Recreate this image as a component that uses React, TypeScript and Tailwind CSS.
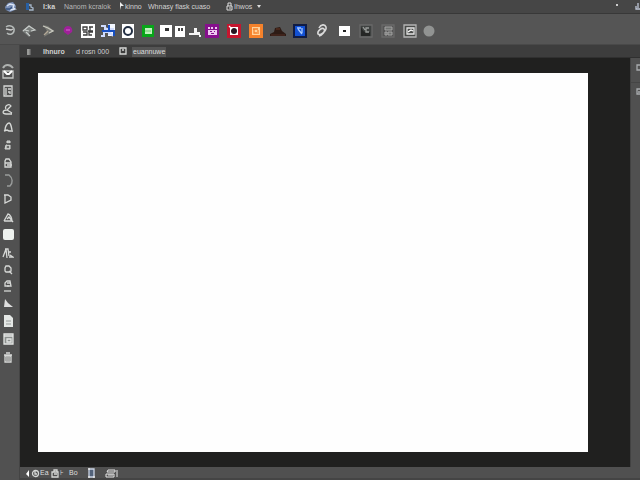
import React from "react";

type IconProps = { label: string; size?: string; w?: number; h?: number; children: React.ReactNode };

function Tool({ label, size = "w-[22px] h-5", w = 16, h = 16, children }: IconProps) {
  return (
    <button type="button" aria-label={label} className={`flex shrink-0 items-center justify-center ${size}`}>
      <svg width={w} height={h} viewBox={`0 0 ${w} ${h}`} fill="none" strokeWidth={1.3} className="shrink-0" aria-hidden="true">
        {children}
      </svg>
    </button>
  );
}

const light = "#d6d8d6";

function MenuBar() {
  return (
    <header className="flex h-[14px] items-center border-b border-[#383838] bg-[#464646] text-[7px] leading-3 text-[#d2d2d2]">
      <Tool label="Home" size="w-5 h-3" w={13} h={12}>
        <path d="M1 6 4 2l5-1 3 4-1 4-5 2-4-2Z" fill="#7b90b8" />
        <path d="m3 5 3-2 4 1-1 3 2 1-5 1" stroke="#dce6f5" />
        <path d="M2 8h4l2-2" stroke="#34527f" />
      </Tool>
      <Tool label="Application" size="w-5 h-3" w={10} h={10}>
        <path d="M1 1h3v7H1z" fill="#2860a4" />
        <path d="M4 3h2v2l2 1v2H4" stroke="#a4b5c8" />
      </Tool>
      <nav className="flex items-center whitespace-nowrap">
        <button type="button" className="w-6 pl-[3px] text-left font-bold">I:ka</button>
        <button type="button" className="w-[55px] text-left text-[#b8b8b8]">Nanom kcralok</button>
        <button type="button" className="flex w-[29px] items-center gap-px text-left">
          <svg width="5" height="9" viewBox="0 0 5 9" aria-hidden="true"><path d="M1 0v8l1-4h3z" fill="#eee" /></svg>
          kinno
        </button>
        <button type="button" className="w-[78px] text-left">Whnasy flask cuaso</button>
        <button type="button" className="flex items-center gap-px">
          <svg width="7" height="9" viewBox="0 0 7 9" fill="none" aria-hidden="true"><path d="M2 4V1h3v3M1 4h5v4H1zM3 6h2" stroke="#ddd" /></svg>
          Ihwos
          <svg width="5" height="5" viewBox="0 0 5 5" className="ml-1" aria-hidden="true"><path d="M0 1h4L2 4z" fill="#ddd" /></svg>
        </button>
      </nav>
      <div className="ml-auto flex items-center">
        <button type="button" aria-label="Minimize" className="mr-[17px] mb-[4px] h-[2px] w-[2px] bg-[#ccc]" />
        <Tool label="Window" size="w-[5px] h-3" w={5} h={9}>
          <path d="M1 4v3h4M3 1v5" stroke="#bfc6d6" />
        </Tool>
      </div>
    </header>
  );
}

function ToolBar() {
  return (
    <div className="flex h-[31px] items-center border-b border-[#494949] bg-[#555555] pt-[3px]">
      <div className="flex w-[78px]">
        <Tool label="Undo" size="w-[19px] h-5">
          <path d="M4 4c4-3 9 0 8 4s-5 4-7 2" stroke="#b5bab8" strokeWidth="1.5" />
          <path d="m4 6 5 1 2-1" stroke="#d0d0d0" />
        </Tool>
        <Tool label="Move" size="w-[19px] h-5">
          <path d="m1 8 7-6 6 5-6 3 0 4Z" fill="#777b79" />
          <path d="m2 8 6-5 6 4-4 1M5 9l4 4M4 7l4 1" stroke="#c8ccca" strokeWidth="1.2" />
        </Tool>
        <Tool label="Brush" size="w-[19px] h-5">
          <path d="m3 2 5 1 6 5-5 3-5 3 3-6Z" fill="#777873" />
          <path d="m3 3 5 2 5 3-4 2" stroke="#c9c9bf" />
          <path d="m4 12 4-4" stroke="#b3a896" />
        </Tool>
        <Tool label="Color spot">
          <path d="M8 3c3 0 5 3 4 6l-4 3-4-3c-1-3 1-6 4-6Z" fill="#a0209a" />
          <path d="M6 7h4" stroke="#c85bc3" />
        </Tool>
      </div>
      <div className="flex w-[81px]">
        <Tool label="Grid" size="w-5 h-5">
          <path d="M1 1h14v14H1z" fill="#fff" />
          <path d="M3 4h4v3H3zM9 4h4M10 4v4h3M3 9h4v3H3M13 9H9v3h3M8 8h3" stroke="#3c3c3c" />
        </Tool>
        <Tool label="Link objects" size="w-5 h-5">
          <path d="M8 1h7v12H8z" fill="#f3f7ff" />
          <path d="M1 3h4v3h4v6M1 13h3V9h4M6 5l7 8M9 1v5h5" stroke="#cfdcff" strokeWidth="2" />
          <path d="M9 2v6h5v5M2 8h6" stroke="#174fc1" strokeWidth="2" />
        </Tool>
        <Tool label="Ellipse" size="w-5 h-5">
          <path d="M2 1h12v14H2z" fill="#fff" />
          <circle cx="8" cy="8" r="4" stroke="#243044" strokeWidth="2" />
        </Tool>
        <Tool label="Green swatch" size="w-5 h-5">
          <path d="M2 2h12v12H2z" fill="#08a619" />
          <path d="M5 5h7v6H5z" fill="#bff1bd" />
          <path d="M5 8h6" stroke="#80d781" />
        </Tool>
      </div>
      <div className="flex w-[42px]">
        <Tool label="Message" size="w-[14px] h-5" w={12}>
          <path d="M0 2h12v12H0z" fill="#fff" /><path d="M5 5h4v3H5z" fill="#333" />
        </Tool>
        <Tool label="Quote" size="w-[14px] h-5" w={10}>
          <path d="M0 3h10v11H0z" fill="#fff" /><path d="M3 5h2v3H3zM6 5h2v3H6z" fill="#444" />
        </Tool>
        <Tool label="Stamp" size="w-[14px] h-5" w={13}>
          <path d="M6 5h3v4h3v3H1v-2h5zM11 12h2v2h-2z" fill="#f5f5f5" />
        </Tool>
      </div>
      <div className="flex">
        <Tool label="Pattern">
          <path d="M1 1h14v14H1z" fill="#86108c" />
          <path d="M4 4h2v2H4zM7 4h2v2H7zM11 4h2v2h-2zM4 7h9v5H4z" fill="#edcaef" />
          <path d="M6 8h2v1H6zM10 8h1v1h-1zM7 10h3v1H7z" fill="#86108c" />
        </Tool>
        <Tool label="Red swatch">
          <path d="M1 1h14v14H1z" fill="#c5162f" />
          <path d="M4 4h8v8H4z" fill="#fff" /><circle cx="8" cy="8" r="3" fill="#271622" />
          <path d="m3 3 3 3" stroke="#fff" />
        </Tool>
        <Tool label="Orange swatch">
          <path d="M1 1h14v14H1z" fill="#f5822b" />
          <path d="M4 4h8v8H4z" fill="#ffd39d" /><path d="M5 6h5M6 6v4h3M10 7v4" stroke="#f5822b" />
        </Tool>
        <Tool label="Landscape">
          <path d="M0 13v-2l4-2 1-4 5-1 2 4 4 3v2z" fill="#2d1b15" />
          <path d="M1 12h14" stroke="#4b2920" /><path d="M6 6h4" stroke="#5b3020" />
        </Tool>
        <Tool label="Blue swatch">
          <path d="M1 1h14v14H1z" fill="#101c44" /><path d="M3 3h10v10H3z" fill="#1251d4" />
          <path d="M5 5h4M6 6l4 5M10 5v5" stroke="#a6c9ff" />
        </Tool>
        <Tool label="Link">
          <path d="M5 5c2-4 6-4 7-1 1 4-6 9-8 7-1-3 4-7 6-5s-2 6-5 7" stroke="#dadada" strokeWidth="1.6" />
        </Tool>
        <Tool label="Subtract" w={12}>
          <path d="M1 3h11v10H1z" fill="#fff" /><path d="M5 8h3" stroke="#222" strokeWidth="2" />
        </Tool>
        <Tool label="Mask">
          <path d="M2 2h12v12H2z" fill="#3e4140" stroke="#696969" />
          <path d="M3 4c2 5 4 6 9 5v4H3z" fill="#252625" /><path d="M11 5H8v4h3M5 4l2 3" stroke="#999c9a" />
        </Tool>
        <Tool label="Layers">
          <path d="M2 2h12v12H2z" stroke="#6a6a6a" />
          <path d="M5 4h7v3H5zM5 9h2v3H5zM8 9h4v3H8z" fill="#707371" stroke="#a4a4a4" strokeWidth="1" />
        </Tool>
        <Tool label="Preview">
          <path d="M2 2h12v12H2z" fill="#494b49" stroke="#b4b4b4" />
          <path d="M5 5h7v6H5z" stroke="#e5e5e5" /><path d="m6 9 3-2 2 1" stroke="#fff" />
        </Tool>
        <Tool label="Circle brush" size="w-[16px] h-5" w={12} h={12}>
          <circle cx="6" cy="6" r="5.5" fill="#919392" />
        </Tool>
      </div>
    </div>
  );
}

function LeftRail() {
  const slot = "w-4 h-[18px]";
  return (
    <aside className="flex w-5 shrink-0 flex-col border-r border-[#444] bg-[#515151] pt-4">
      <Tool label="Hand" size="w-4 h-[21px]" w={14} h={17}>
        <path d="M2 5c2-4 7-4 10 0" stroke="#aeb1af" strokeWidth="2" />
        <path d="M2 8h10v7H2z" stroke="#c5c7c5" /><path d="m3 8 3 3h2l3-3" stroke="#fff" strokeWidth="2" />
      </Tool>
      <Tool label="Artboard" size={slot} w={12} h={12}>
        <path d="M2 1h8v10H2z" stroke={light} /><path d="M4 3v7M6 4h3M6 7h2v2" stroke={light} />
      </Tool>
      <Tool label="Lasso" size={slot} w={12} h={12}>
        <path d="M4 6c-2-3 3-6 5-3L5 7c-5 0-5 4-1 4h6M5 7l5 3" stroke={light} />
      </Tool>
      <Tool label="Pen" size={slot} w={12} h={12}>
        <path d="M3 9c0-3 2-7 4-7s2 3 3 7M2 10l3-1 2 1h4" stroke={light} strokeWidth="1.4" />
      </Tool>
      <Tool label="Clone" size={slot} w={10} h={10}>
        <path d="M4 1h3v2H4zM3 5h4v4H2z" fill="#afb2af" stroke={light} strokeWidth="1" /><path d="M4 4h3M4 7h2" stroke="#555" />
      </Tool>
      <Tool label="Frame" size={slot} w={10} h={10}>
        <path d="M2 9V3l1-2h3l2 3v5Z" stroke={light} /><path d="M2 5h6M4 7h5" stroke={light} />
      </Tool>
      <Tool label="Curve" size={slot} w={12} h={14}>
        <path d="M3 1h4c4 3 4 8 1 11H5" stroke="#999c9b" strokeWidth="1.4" />
      </Tool>
      <Tool label="Shape" size={slot} w={10} h={10}>
        <path d="M2 1v8l6-3V3L5 1H1" stroke={light} />
      </Tool>
      <Tool label="Path text" size={slot} w={11} h={11}>
        <path d="m1 9 4-7c2 0 4 4 4 7H1M4 7l2-2 4 5" stroke={light} />
      </Tool>
      <Tool label="Rounded rectangle" size={slot} w={12} h={12}>
        <rect x="1" y="0" width="11" height="11" rx="2" fill="#edf1ee" />
      </Tool>
      <Tool label="Perspective" size={slot} w={12} h={12}>
        <path d="m1 10 3-8 1 9M3 2h3l1 7M7 5h2M8 8l3 2H7" stroke={light} />
      </Tool>
      <Tool label="Zoom" size="w-4 h-4" w={10} h={10}>
        <path d="M3 1h3l2 2v3L6 7H3L2 6V3ZM6 6l3 3" stroke={light} />
      </Tool>
      <Tool label="Sampler" size="w-4 h-4" w={10} h={14}>
        <path d="M2 7V4l2-2h3l1 5ZM4 4h3M5 6v2" stroke={light} /><path d="M1 12h7" stroke={light} />
      </Tool>
      <Tool label="Gradient" size={slot} w={10} h={10}>
        <path d="m2 1 3 4 5 4H1z" fill="#dedede" />
      </Tool>
      <Tool label="Document" size={slot} w={10} h={12}>
        <path d="M1 0h6l3 3v9H1z" fill="#e4e7e5" /><path d="M3 6h5M3 9h5" stroke="#969a98" strokeWidth="1" />
      </Tool>
      <Tool label="Panel" size={slot} w={11} h={12}>
        <path d="M1 1h9v10H1z" fill="#8b8f8d" stroke="#e3e5e3" /><path d="M1 3h9M4 6h4v3H4z" stroke="#e3e5e3" />
      </Tool>
      <Tool label="Delete" size={slot} w={10} h={11}>
        <path d="M3 1h4M1 3h8M2 4h6v6H2zM4 5v4M6 5v4" stroke={light} />
      </Tool>
    </aside>
  );
}

function TabBar() {
  return (
    <nav className="flex h-[13px] shrink-0 items-center border-b border-[#303030] bg-[#3d3d3d] pt-px text-[7px] leading-[10px] whitespace-nowrap text-[#d0d0d0]">
      <Tool label="Panel toggle" size="w-[18px] h-3" w={6} h={8}>
        <path d="M1 1h3v6H1z" fill="#999a98" /><path d="M4 1v6" stroke="#777" />
      </Tool>
      <button type="button" className="w-[38px] pl-[5px] text-left font-bold">Ihnuro</button>
      <button type="button" className="w-[38px] text-left">d rosn 000</button>
      <Tool label="Page" size="w-[18px] h-3" w={8} h={9}>
        <path d="M1 1h6v6H1zM3 3h2" stroke={light} />
      </Tool>
      <button type="button" className="h-[10px] bg-[#555] px-px text-[#ddd]">euannuwe</button>
    </nav>
  );
}

function StatusBar() {
  return (
    <footer className="flex h-[13px] shrink-0 items-center border-b-2 border-[#444] bg-[#505050] pt-px pl-1 text-[7px] leading-[10px] text-[#dedede]">
      <Tool label="Previous" size="w-[6px] h-3" w={5} h={9}>
        <path d="M4 1v7L1 5z" fill="#fff" />
      </Tool>
      <Tool label="History" size="w-[10px] h-3" w={9} h={9}>
        <circle cx="4.5" cy="4.5" r="3" stroke={light} /><path d="M4 2v3h2" stroke={light} />
      </Tool>
      <span className="w-[11px]">Ea</span>
      <Tool label="Save view" size="w-[9px] h-3" w={9} h={9}>
        <path d="M1 3h6v5H1zM3 3V1h3v2M3 5h3" stroke={light} />
      </Tool>
      <span className="w-[9px]">⊦</span>
      <span className="w-4">Bo</span>
      <Tool label="Page view" size="w-3 h-3" w={9} h={11}>
        <path d="M2 1h5v8H2z" fill="#52627a" stroke="#cbd5e5" /><path d="M1 1h2M1 9h2M6 9h2" stroke="#e5e5e5" />
      </Tool>
      <Tool label="Split view" size="ml-[6px] w-4 h-3" w={13} h={9}>
        <path d="M3 1h7v2H2zM1 5h8v3H1zM3 6h5M12 1v7" stroke="#e5e5e5" strokeWidth="1" />
      </Tool>
    </footer>
  );
}

export default function App() {
  return (
    <div className="flex min-h-screen flex-col overflow-hidden bg-[#505050] font-['Liberation_Sans',Arial,sans-serif]">
      <MenuBar />
      <ToolBar />
      <div className="flex grow">
        <LeftRail />
        <div className="flex min-w-0 grow flex-col">
          <TabBar />
          <div className="flex grow">
            <main className="flex grow bg-[#20201f] pt-[15px] pr-[42px] pb-[15px] pl-[18px]" aria-label="Workspace">
              <section className="grow bg-[#fefefe]" aria-label="Canvas" />
            </main>
            <aside className="flex w-[10px] shrink-0 flex-col items-end border-l border-[#424242] bg-[#505050] pt-1">
              <Tool label="Properties" size="w-[4px] h-[12px]" w={4} h={8}>
                <path d="M4 1H1v5h3" stroke="#a8abad" />
              </Tool>
              <div className="mt-2 w-full border-t border-[#454545] pt-[3px]">
                <Tool label="Adjustments" size="ml-auto w-[4px] h-[12px]" w={4} h={8}>
                  <path d="M4 1H1v5h3M2 4h2" stroke="#a8abad" />
                </Tool>
              </div>
            </aside>
          </div>
          <StatusBar />
        </div>
      </div>
    </div>
  );
}
